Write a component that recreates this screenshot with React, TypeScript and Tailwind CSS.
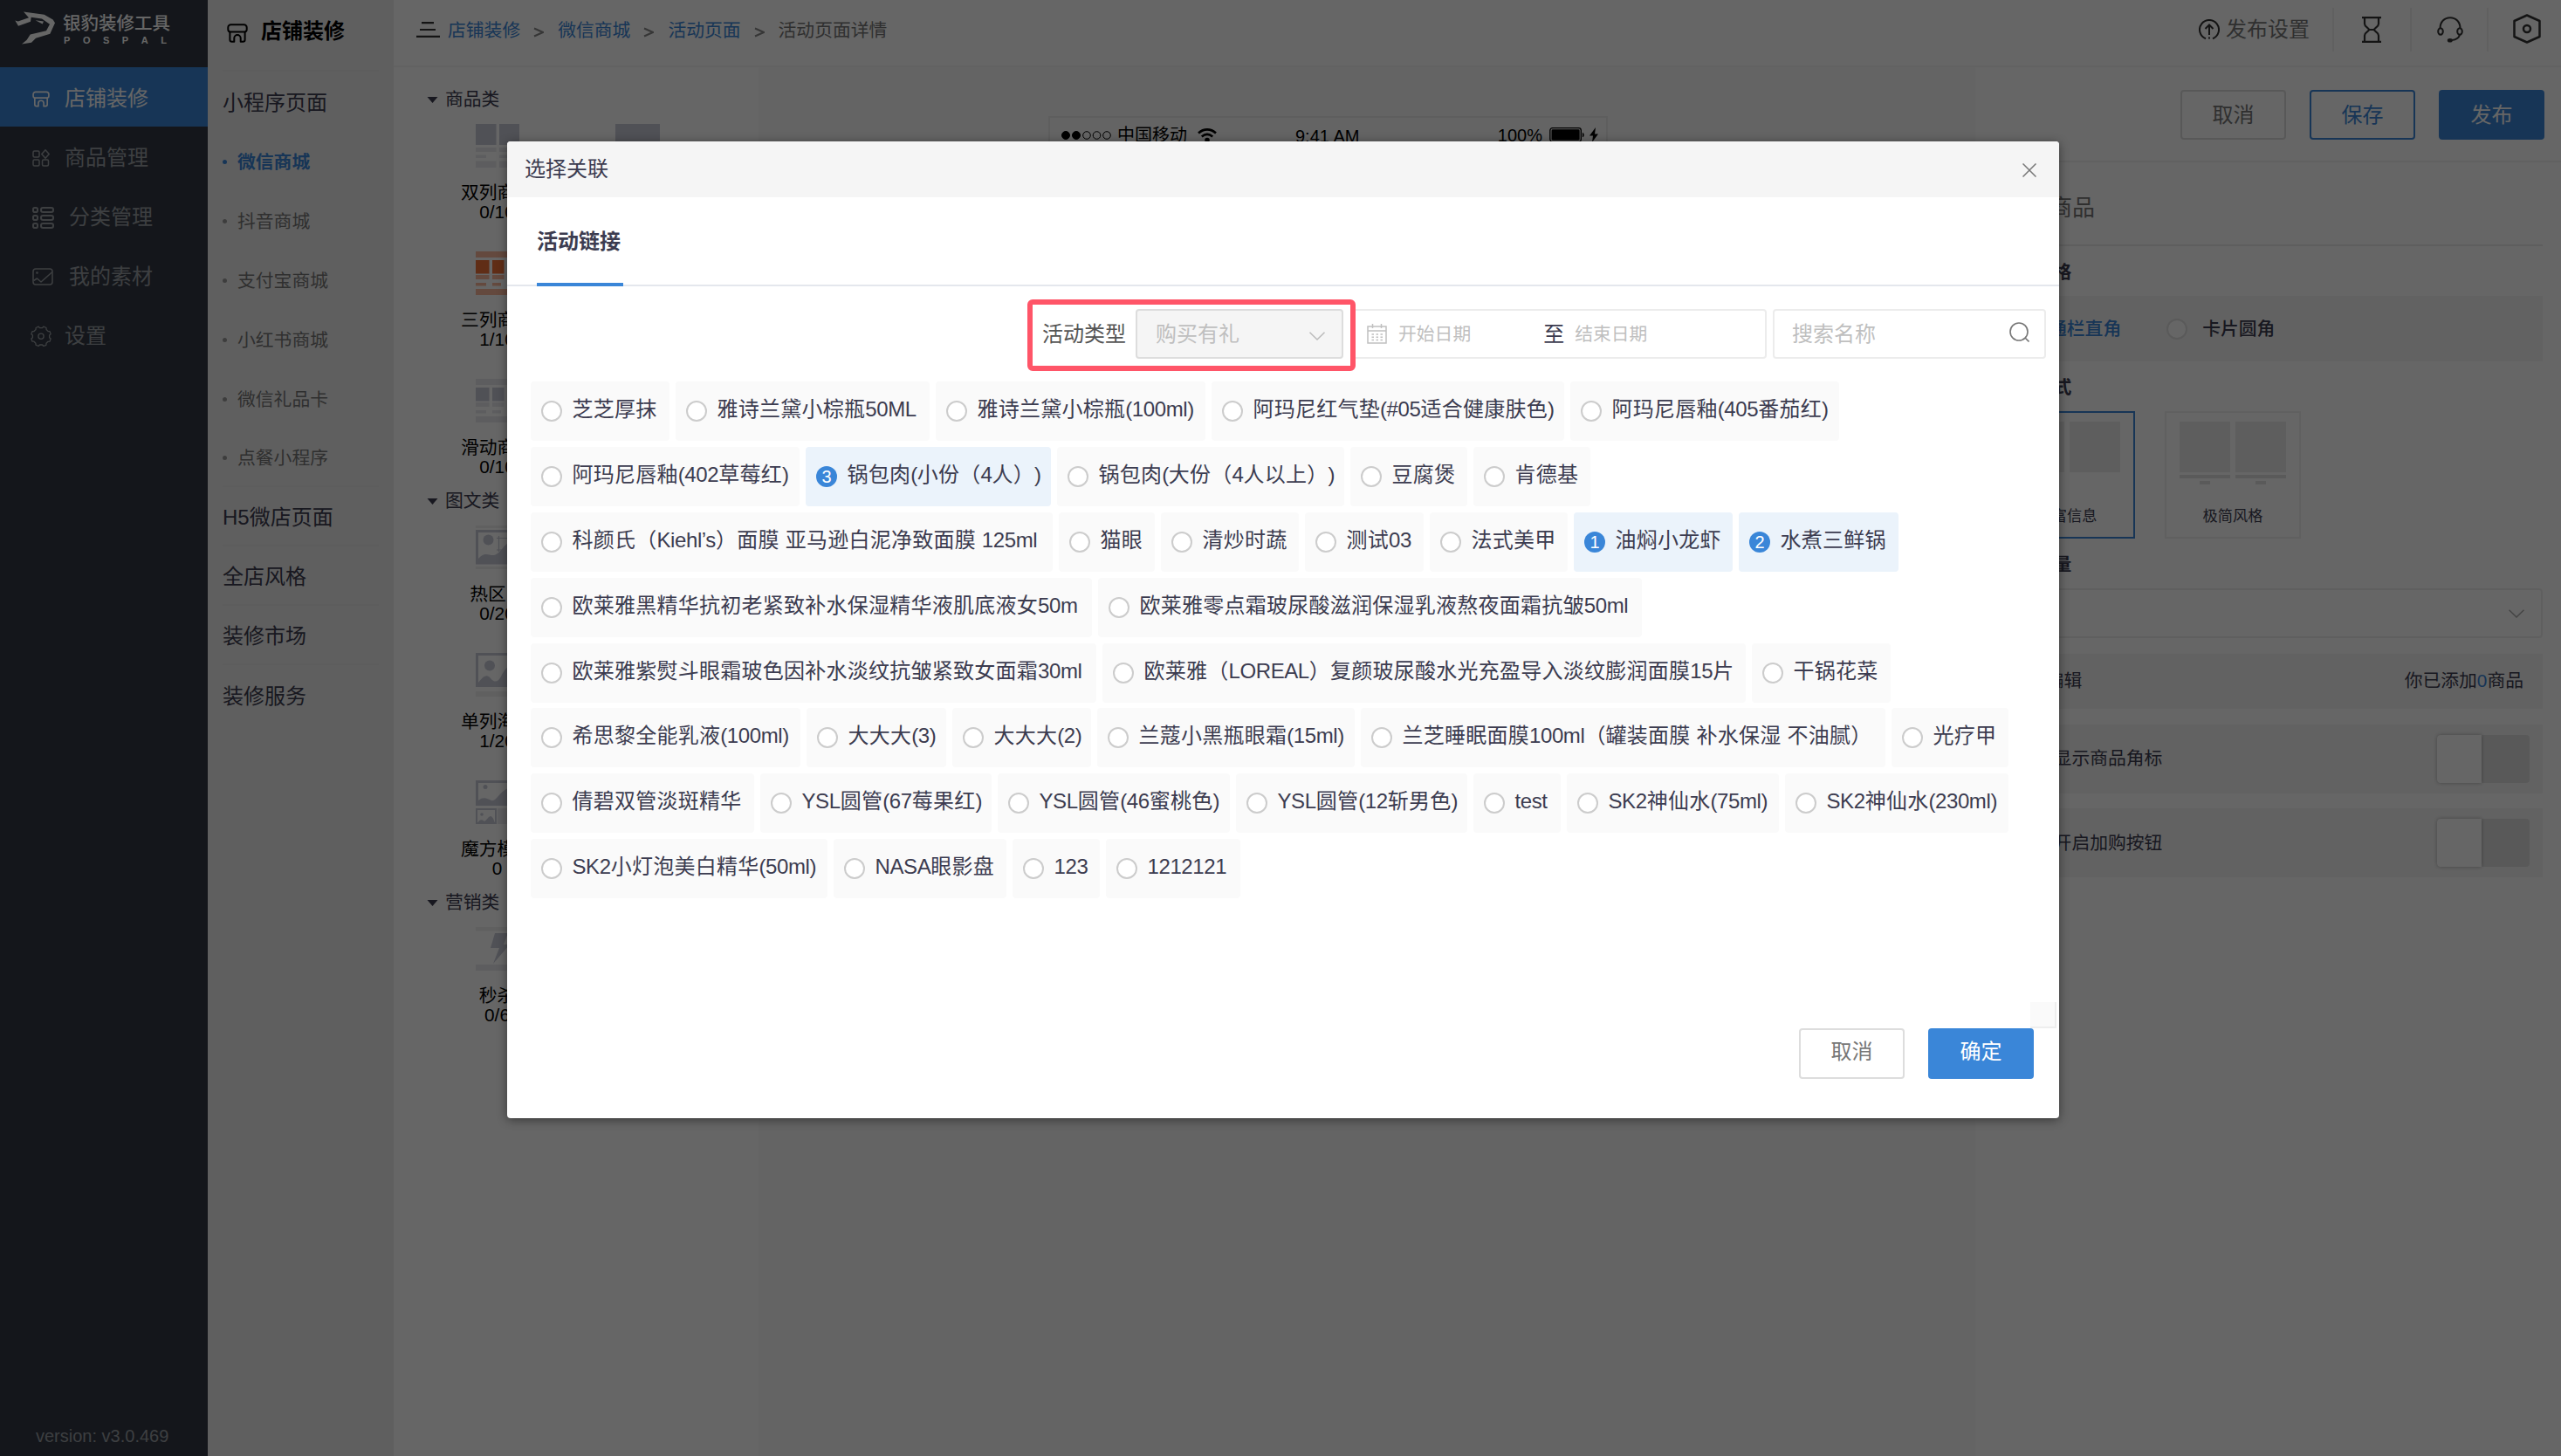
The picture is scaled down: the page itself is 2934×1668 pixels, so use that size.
import React from "react";

type IconProps = { className?: string };

const StoreIcon = ({ className = "" }: IconProps) => (
  <svg viewBox="0 0 24 22" fill="none" stroke="currentColor" strokeWidth="2" strokeLinejoin="round" className={className}>
    <path d="M4.5 1.2h15a3.2 3.2 0 0 1 3.2 3.2v2.4a2.6 2.6 0 0 1-2.6 2.6H3.9a2.6 2.6 0 0 1-2.6-2.6V4.400a3.200 3.200 0 0 1 3.200-3.200z" />
    <path d="M3.400 9.600v8.900a2.300 2.300 0 0 0 2.300 2.300h2.600v-4a3.700 3.700 0 0 1 7.400 0v4h2.600a2.300 2.300 0 0 0 2.300-2.300V9.600" />
  </svg>
);

const GoodsIcon = ({ className = "" }: IconProps) => (
  <svg viewBox="0 0 20 20" fill="none" stroke="currentColor" strokeWidth="1.5" className={className}>
    <rect x="1" y="2" width="7" height="7" rx="1.5" />
    <rect x="1" y="12" width="7" height="7" rx="1.500" />
    <rect x="11.500" y="12" width="7" height="7" rx="1.500" />
    <path d="M15 .8l4.200 4.700L15 10.200l-4.200-4.700z" strokeLinejoin="round" />
  </svg>
);

const CategoryIcon = ({ className = "" }: IconProps) => (
  <svg viewBox="0 0 25 25" fill="none" stroke="currentColor" strokeWidth="2" className={className}>
    {[1, 10, 19].map((y) => (
      <g key={y}>
        <rect x="1" y={y} width="5" height="5" rx="1.800" />
        <rect x="10" y={y} width="14" height="5" rx="2.200" />
      </g>
    ))}
  </svg>
);

const MaterialIcon = ({ className = "" }: IconProps) => (
  <svg viewBox="0 0 24 20" fill="none" stroke="currentColor" strokeWidth="1.500" className={className}>
    <rect x="1" y="1" width="22" height="18" rx="3" />
    <path d="M1.500 14.500l4-2.500 4.500 4L23 4.500" strokeLinejoin="round" />
    <circle cx="5.500" cy="5.500" r=".6" />
  </svg>
);

const GearIcon = ({ className = "" }: IconProps) => (
  <svg viewBox="0 0 24 24" fill="none" stroke="currentColor" strokeWidth="1.300" strokeLinejoin="round" className={className}>
    <path d="M9.200 1.200l1.300 1.400h3l1.300-1.400 3.200 1.300.1 2 2 2.100h2l1 3.200-1.500 1.200v2.800l1.500 1.300-1.100 3.100-2 .1-2 2-.1 2-3.100 1.200-1.300-1.500h-3l-1.300 1.500-3.200-1.300-.1-2-2-2-2-.1L.9 15l1.500-1.300v-2.800L.9 9.700 2 6.600l2-.1 2-2 .1-2z" />
    <circle cx="12" cy="12.300" r="3.100" />
  </svg>
);

const Logo = () => (
  <svg viewBox="51 41 138 113" className="h-[38px] w-[46px] text-white" fill="currentColor">
    <path d="M52 72l10 3 37-13-18-20 71 10 30 17 7 11-17 38-49 15-15 15-33 5 17-14 12-19 55-13 12-22-27-19-37-5-2 15-42 15z" />
    <path d="M122 71l28 4-4 9z" />
  </svg>
);

const navItems = [
  { label: "店铺装修", icon: <StoreIcon className="h-[19px] w-5" />, box: "ml-[37px] w-5 mr-[17px]", active: true },
  { label: "商品管理", icon: <GoodsIcon className="h-5 w-5" />, box: "ml-[37px] w-5 mr-[17px]" },
  { label: "分类管理", icon: <CategoryIcon className="h-[25px] w-[25px]" />, box: "ml-[37px] w-[25px] mr-[17px]" },
  { label: "我的素材", icon: <MaterialIcon className="h-5 w-6" />, box: "ml-[37px] w-6 mr-[18px]" },
  { label: "设置", icon: <GearIcon className="h-6 w-6" />, box: "ml-[35px] w-6 mr-[15px]" },
];

const Sidebar = () => (
  <aside className="flex h-full w-[238px] shrink-0 flex-col bg-[#323944]">
    <div className="flex h-[77px] items-start pt-[13px] pl-[17px]">
      <Logo />
      <div className="ml-[9px] pt-px text-white">
        <div className="text-[20.500px] leading-[26px] font-medium">银豹装修工具</div>
        <div className="flex w-[119px] justify-between pl-px text-[11px] leading-[12px] font-bold">
          {"POSPAL".split("").map((c, i) => (
            <span key={i}>{c}</span>
          ))}
        </div>
      </div>
    </div>
    <nav>
      {navItems.map((n) => (
        <div key={n.label} className={n.active ? "flex h-[68px] items-center bg-[#3a86d8] text-white" : "flex h-[68px] items-center text-[#999da3]"}>
          <div className={n.box + " pt-1"}>{n.icon}</div>
          <span className="pt-[3px] text-2xl">{n.label}</span>
        </div>
      ))}
    </nav>
    <div className="mt-auto pb-[9px] pl-[41px] text-[20px] leading-7 text-[#999da3]">version: v3.0.469</div>
  </aside>
);

const subItems = ["微信商城", "抖音商城", "支付宝商城", "小红书商城", "微信礼品卡", "点餐小程序"];
const sections = ["H5微店页面", "全店风格", "装修市场", "装修服务"];

const SubNav = () => (
  <aside className="h-full w-[213px] shrink-0 bg-[#eeeeee] px-[17px]">
    <div className="flex h-[82px] items-start border-b-2 border-[#e9e9e9]">
      <StoreIcon className="mt-[27px] ml-[5px] h-[22px] w-6 text-black" />
      <span className="mt-[18px] ml-[15px] text-2xl leading-9 font-bold text-black">店铺装修</span>
    </div>
    <div className="flex h-[68px] items-center pt-1 text-2xl text-[#3c3c50]">小程序页面</div>
    {subItems.map((s, i) => (
      <div
        key={s}
        className={
          "flex h-[68px] items-center pt-[3px] text-[20.800px] " +
          (i === 0 ? "font-bold text-[#3a86d8] " : "text-[#777] ") +
          (i === subItems.length - 1 ? "border-b-2 border-[#e9e9e9]" : "")
        }
      >
        <span className={i === 0 ? "mr-[12px] h-[5px] w-[5px] rounded-full bg-[#3a86d8]" : "mr-[12px] h-[5px] w-[5px] rounded-full bg-[#999]"} />
        {s}
      </div>
    ))}
    {sections.map((s, i) => (
      <div key={s} className={"flex h-[68px] items-center pt-1 text-2xl text-[#3c3c50] " + (i < 3 ? "border-b-2 border-[#e9e9e9]" : "")}>
        {s}
      </div>
    ))}
  </aside>
);

const TopBar = () => (
  <header className="flex h-[77px] w-full shrink-0 items-start border-b-2 border-[#f5f5f5] bg-white">
    <svg viewBox="0 0 27 18" className="mt-[25px] ml-[26px] h-[18px] w-[27px]" stroke="#333" strokeWidth="2.200">
      <path d="M6 1.200h14M4 9h18M0 16.800h27" />
    </svg>
    <div className="mt-[19px] flex items-center pl-[9px] text-[20.800px] leading-8 text-[#3a86d8]">
      {["店铺装修", "微信商城", "活动页面"].map((t) => (
        <React.Fragment key={t}>
          <span>{t}</span>
          <svg viewBox="0 0 12 12" className="mt-[3px] mr-[16px] ml-[15px] h-3 w-3" fill="none" stroke="#888" strokeWidth="2">
            <path d="M1 1.500l10 4.500-10 4.500" />
          </svg>
        </React.Fragment>
      ))}
      <span className="text-[#777]">活动页面详情</span>
    </div>
    <div className="ml-auto flex items-start">
      <svg viewBox="0 0 24 24" className="mt-[22px] h-6 w-6" fill="none" stroke="#333" strokeWidth="2">
        <path d="M8 22.200A11 11 0 1 1 16 22.200M12 18V7M7.500 11L12 6.500 16.500 11M12 20.500v2" />
      </svg>
      <span className="mt-4 ml-[7px] text-2xl leading-9 text-[#777]">发布设置</span>
      <div className="mt-[9px] ml-[26px] h-[50px] w-0.5 bg-[#f0f0f0]" />
      <svg viewBox="0 0 22 30" className="mt-[19px] ml-[32px] h-[30px] w-[22px]" fill="none" stroke="#333" strokeWidth="2.200">
        <path d="M0 1.200h22M0 28.800h22M3 1.200v7c0 4 5 4.500 5 6.800s-5 2.800-5 6.800v7M19 1.200v7c0 4-5 4.500-5 6.800s5 2.800 5 6.800v7M7 15h8" />
      </svg>
      <div className="mt-[9px] ml-[33px] h-[50px] w-0.5 bg-[#f0f0f0]" />
      <svg viewBox="0 0 30 30" className="mt-[19px] ml-[29px] h-[30px] w-[30px]" fill="none" stroke="#333" strokeWidth="2">
        <path d="M3.500 13.500C3.500 6 8.500 1.200 15 1.200S26.500 6 26.500 13.500" />
        <ellipse cx="4" cy="17" rx="2.800" ry="3.800" />
        <ellipse cx="26" cy="17" rx="2.800" ry="3.800" />
        <path d="M26 21c-1 3.500-4.500 5.500-9 6" />
        <ellipse cx="14.800" cy="27.200" rx="2" ry="1.300" fill="#333" />
      </svg>
      <div className="mt-[9px] ml-[27px] h-[50px] w-0.5 bg-[#f0f0f0]" />
      <svg viewBox="0 0 32 34" className="mt-[16px] mr-[23px] ml-[28px] h-[34px] w-8" fill="none" stroke="#333" strokeWidth="2.500" strokeLinejoin="round">
        <path d="M16 1.500L30.500 8v18L16 32.500 1.500 26V8z" />
        <circle cx="16" cy="17" r="4" />
      </svg>
    </div>
  </header>
);

const GridThumb = ({ cols, accent = false }: { cols: number; accent?: boolean }) => {
  const main = accent ? "#f07038" : "#c8cad8";
  const soft = accent ? "#f9b79c" : "#e8e9ee";
  if (cols === 2)
    return (
      <svg viewBox="0 0 50 50" className="h-[50px] w-[50px]">
        {[0, 27].map((x) => (
          <g key={x}>
            <rect x={x} width="23.500" height="24" fill={main} />
            <rect x={x} y="27" width="23.500" height="5" fill={soft} />
            <rect x={x} y="35.500" width="12" height="3.500" fill={soft} />
            <rect x={x} y="42.500" width="23.500" height="7.500" fill={soft} />
          </g>
        ))}
      </svg>
    );
  return (
    <svg viewBox="0 0 50 50" className="h-[50px] w-[50px]">
      <rect width="50" height="7" fill={soft} />
      {[0, 19, 36].map((x) => (
        <g key={x}>
          <rect x={x} y="10" width={x ? 13.5 : 15.5} height="15.500" fill={main} />
          <rect x={x} y="27" width={x ? 13.5 : 15.5} height="5" fill={soft} />
          <rect x={x} y="36" width={x ? 10 : 12} height="3.500" fill={soft} />
        </g>
      ))}
      <rect y="43" width="50" height="7" fill={soft} />
    </svg>
  );
};

const HotspotThumb = () => (
  <svg viewBox="0 0 50 50" className="h-[50px] w-[50px]">
    <rect width="50" height="3" fill="#f0f0f0" />
    <rect x="1.500" y="6.500" width="47" height="36.500" fill="none" stroke="#c8cad8" strokeWidth="3" />
    <circle cx="14.500" cy="16.500" r="6" fill="#c8cad8" />
    <path d="M3 38c8-9 12-3 18-4s10-10 16-14l12 8v15H3z" fill="#c8cad8" />
    <path d="M26.500 12v18M24 14.500h18M24 28h18" stroke="#c8cad8" strokeWidth="1.200" />
    <rect y="47" width="50" height="3" fill="#f0f0f0" />
  </svg>
);

const PosterThumb = () => (
  <svg viewBox="0 0 50 50" className="h-[50px] w-[50px]">
    <rect x="1.500" y="1.500" width="47" height="36" fill="none" stroke="#c8cad8" strokeWidth="3" />
    <circle cx="16" cy="14.500" r="6" fill="#c8cad8" />
    <path d="M3 34c5-6 9-11 14-5s9 4 12-2 6-11 9-11l11 12v10H3z" fill="#c8cad8" />
    <rect y="44" width="50" height="6" fill="#f0f0f0" />
  </svg>
);

const CubeThumb = () => (
  <svg viewBox="0 0 50 50" className="h-[50px] w-[50px]">
    <rect x="1.500" y="1.500" width="47" height="26" fill="none" stroke="#c8cad8" strokeWidth="3" />
    <circle cx="11" cy="7.500" r="2.500" fill="#c8cad8" />
    <path d="M3 23c6-5 10-2 15 0s10-11 19-14l12 6v14H3z" fill="#c8cad8" />
    <rect x="1" y="33" width="22" height="16" fill="none" stroke="#c8cad8" strokeWidth="2" />
    <circle cx="7" cy="39" r="1.800" fill="#c8cad8" />
    <path d="M2 49c2-4 5-5 8-2 3-2 5-6 7-6s4 4 5 8z" fill="#c8cad8" />
    <rect x="25" y="32" width="25" height="18" fill="#e8e9ee" />
  </svg>
);

const FlashThumb = () => (
  <svg viewBox="0 0 50 50" className="h-[50px] w-[50px]">
    <rect width="50" height="4.500" fill="#f0f0f0" />
    <path d="M22 7h15l-5 13h7L20 42l7-18h-10z" fill="#c8cad8" />
    <rect y="43" width="50" height="7" fill="#e8e9ee" />
  </svg>
);

const groups = [
  {
    title: "商品类",
    items: [
      { name: "双列商品", count: "0/10", thumb: <GridThumb cols={2} />, extra: true },
      { name: "三列商品", count: "1/10", thumb: <GridThumb cols={3} accent /> },
      { name: "滑动商品", count: "0/10", thumb: <GridThumb cols={3} /> },
    ],
  },
  {
    title: "图文类",
    items: [
      { name: "热区图", count: "0/20", thumb: <HotspotThumb /> },
      { name: "单列海报", count: "1/20", thumb: <PosterThumb /> },
      { name: "魔方模板", count: "0", thumb: <CubeThumb /> },
    ],
  },
  { title: "营销类", items: [{ name: "秒杀", count: "0/6", thumb: <FlashThumb /> }] },
];

const ComponentPanel = () => (
  <section className="h-full w-[418px] shrink-0 bg-white pt-[21px] pl-[38px]">
    {groups.map((g) => (
      <div key={g.title}>
        <div className="flex h-8 items-center text-[20.800px] text-[#3c3c50]">
          <svg viewBox="0 0 12 7" className="mr-[8px] h-[7px] w-[13px]" fill="#3c3c50">
            <path d="M0 0h12L6 7z" />
          </svg>
          {g.title}
        </div>
        <div className="mt-3 flex flex-col gap-[22px]">
          {g.items.map((it) => (
            <div key={it.name} className="flex h-[124px]">
              <div className="flex w-[162px] flex-col items-center text-[20.800px] leading-[23px] text-black">
                {it.thumb}
                <div className="mt-[17px] -ml-px">{it.name}</div>
                <div className="-mt-px -ml-px">{it.count}</div>
              </div>
              {"extra" in it && it.extra ? <div className="ml-[54px] h-6 w-[51px] bg-[#c8cad8]" /> : null}
            </div>
          ))}
        </div>
      </div>
    ))}
  </section>
);

const PhonePreview = () => (
  <section className="flex h-full flex-1 justify-center bg-[#fafafa] pr-[89px]">
    <div className="mt-[56px] h-[1000px] w-[641px] border-2 border-[#ebebeb] text-[20px] text-black">
      <div className="flex h-[39px] items-center">
        <svg viewBox="0 0 58 12" className="ml-3 h-3 w-[58px]" stroke="#000">
          <circle cx="6" cy="6" r="4.500" />
          <circle cx="18" cy="6" r="4.500" />
          <circle cx="30" cy="6" r="4.300" fill="none" />
          <circle cx="41.500" cy="6" r="4.300" fill="none" />
          <circle cx="53" cy="6" r="4.300" fill="none" />
        </svg>
        <span className="ml-[7px]">中国移动</span>
        <svg viewBox="0 0 22 16" className="ml-3 h-4 w-[22px]" fill="none" stroke="#000" strokeWidth="2.600">
          <path d="M1 5.500c6-5.500 14-5.500 20 0M4.800 9.500c4-3.500 8.400-3.500 12.400 0" />
          <circle cx="11" cy="13.500" r="1.500" fill="#000" />
        </svg>
        <span className="ml-[90px] pt-0.5">9:41 AM</span>
        <span className="ml-auto">100%</span>
        <svg viewBox="0 0 42 18" className="ml-[7px] h-[17px] w-[42px]">
          <rect x=".7" y=".7" width="37.600" height="16.600" rx="3" fill="none" stroke="#000" strokeWidth="1.400" />
          <rect x="2.500" y="2.500" width="34" height="13" rx="1.500" />
          <path d="M40 6c2.500 1 2.500 5 0 6z" />
        </svg>
        <svg viewBox="0 0 10 17" className="mr-[9px] ml-[5px] h-[17px] w-2.5">
          <path d="M7 0L0 9.500h4L3 17l7-9.500H6z" />
        </svg>
      </div>
    </div>
  </section>
);

const Toggle = () => (
  <div className="flex h-[55px] w-[106px] rounded bg-[#dfdfdf]">
    <div className="h-full w-[51px] rounded-l bg-white shadow-[0_0_4px_rgba(0,0,0,0.3)]" />
  </div>
);

const PropertyPanel = () => (
  <section className="h-full w-[671px] shrink-0 bg-white">
    <div className="flex h-[109px] items-start justify-end gap-[27px] border-b-2 border-[#f3f3f3] pt-[26px] pr-[19px] text-2xl">
      <div className="flex h-[57px] w-[121px] items-center justify-center rounded border-2 border-[#ddd] text-[#777]">取消</div>
      <div className="flex h-[57px] w-[121px] items-center justify-center rounded border-2 border-[#3a86d8] text-[#3a86d8]">保存</div>
      <div className="flex h-[57px] w-[121px] items-center justify-center rounded bg-[#3a86d8] text-white">发布</div>
    </div>
    <div className="mr-[21px] ml-[27px] text-[20.800px] text-[#3c3c50]">
      <div className="flex h-[96px] items-center border-b-2 border-[#eaeaea] pt-2.5 pl-[6px] text-[26px] text-[#777]">三列商品</div>
      <div className="flex h-[57px] items-center pt-0.5 font-bold">商品风格</div>
      <div className="flex h-[75px] items-center bg-[#f5f5f5] pl-[20px]">
        <span className="h-6 w-6 rounded-full border-2 border-[#3a86d8]" />
        <span className="ml-[13px] font-medium text-[#3a86d8]">通栏直角</span>
        <span className="ml-[52px] h-6 w-6 rounded-full border-2 border-[#e0e0e0] bg-white" />
        <span className="ml-[17px] font-medium">卡片圆角</span>
      </div>
      <div className="flex h-[57px] items-center pt-0.5 font-bold">显示样式</div>
      <div className="flex gap-[34px] text-[17.200px]">
        <div className="h-[146px] w-[156px] border-2 border-[#3a86d8] pt-2.5">
          <div className="flex justify-center gap-1.5">
            <div className="h-[58px] w-[58px] bg-[#ebebeb]" />
            <div className="h-[58px] w-[58px] bg-[#ebebeb]" />
          </div>
          <div className="mt-[38px] text-center leading-6">丰富信息</div>
        </div>
        <div className="h-[146px] w-[156px] border-2 border-[#f0f0f0] pt-2.5">
          <div className="flex justify-center gap-1.5">
            {[0, 1].map((k) => (
              <div key={k} className="flex w-[58px] flex-col items-center">
                <div className="h-[58px] w-full bg-[#ebebeb]" />
                <div className="mt-[3px] h-1 w-full bg-[#e0e0e0]" />
                <div className="mt-[3px] h-1 w-3 bg-[#e0e0e0]" />
              </div>
            ))}
          </div>
          <div className="mt-[24px] text-center leading-6">极简风格</div>
        </div>
      </div>
      <div className="flex h-[57px] items-center pt-0.5 font-bold">商品数量</div>
      <div className="flex h-[57px] items-center justify-end rounded border-2 border-[#eee] pr-[19px]">
        <svg viewBox="0 0 18 10" className="h-2.5 w-[18px]" fill="none" stroke="#aaa" strokeWidth="1.500">
          <path d="M.5.800L9 9 17.500.800" />
        </svg>
      </div>
      <div className="mt-[18px] flex h-[63px] items-center justify-between bg-[#f5f5f5] pr-[22px] pb-0.5 pl-3">
        <span>商品编辑</span>
        <span>
          你已添加<span className="text-[#3a86d8]">0</span>商品
        </span>
      </div>
      {["是否显示商品角标", "是否开启加购按钮"].map((t) => (
        <div key={t} className="mt-[17.500px] flex h-[79px] items-center justify-between bg-[#f5f5f5] pr-[15px] pl-[21px]">
          <span>{t}</span>
          <Toggle />
        </div>
      ))}
    </div>
  </section>
);

type Chip = { t: string; w: string; n?: number };

const rows: Chip[][] = [
  [
    { t: "芝芝厚抹", w: "w-[159px]" },
    { t: "雅诗兰黛小棕瓶50ML", w: "w-[291px]" },
    { t: "雅诗兰黛小棕瓶(100ml)", w: "w-[309px]" },
    { t: "阿玛尼红气垫(#05适合健康肤色)", w: "w-[404px]" },
    { t: "阿玛尼唇釉(405番茄红)", w: "w-[308px]" },
  ],
  [
    { t: "阿玛尼唇釉(402草莓红)", w: "w-[308px]" },
    { t: "锅包肉(小份（4人）)", w: "w-[281px]", n: 3 },
    { t: "锅包肉(大份（4人以上）)", w: "w-[329px]" },
    { t: "豆腐煲", w: "w-[134px]" },
    { t: "肯德基", w: "w-[134px]" },
  ],
  [
    { t: "科颜氏（Kiehl’s）面膜 亚马逊白泥净致面膜 125ml", w: "w-[598px]" },
    { t: "猫眼", w: "w-[110px]" },
    { t: "清炒时蔬", w: "w-[158px]" },
    { t: "测试03", w: "w-[136px]" },
    { t: "法式美甲", w: "w-[158px]" },
    { t: "油焖小龙虾", w: "w-[182px]", n: 1 },
    { t: "水煮三鲜锅", w: "w-[183px]", n: 2 },
  ],
  [
    { t: "欧莱雅黑精华抗初老紧致补水保湿精华液肌底液女50m", w: "w-[643px]" },
    { t: "欧莱雅零点霜玻尿酸滋润保湿乳液熬夜面霜抗皱50ml", w: "w-[623px]" },
  ],
  [
    { t: "欧莱雅紫熨斗眼霜玻色因补水淡纹抗皱紧致女面霜30ml", w: "w-[648px]" },
    { t: "欧莱雅（LOREAL）复颜玻尿酸水光充盈导入淡纹膨润面膜15片", w: "w-[737px]" },
    { t: "干锅花菜", w: "w-[159px]" },
  ],
  [
    { t: "希思黎全能乳液(100ml)", w: "w-[309px]" },
    { t: "大大大(3)", w: "w-[160px]" },
    { t: "大大大(2)", w: "w-[159px]" },
    { t: "兰蔻小黑瓶眼霜(15ml)", w: "w-[295px]" },
    { t: "兰芝睡眠面膜100ml（罐装面膜 补水保湿 不油腻）", w: "w-[601px]" },
    { t: "光疗甲", w: "w-[134px]" },
  ],
  [
    { t: "倩碧双管淡斑精华", w: "w-[256px]" },
    { t: "YSL圆管(67莓果红)", w: "w-[265px]" },
    { t: "YSL圆管(46蜜桃色)", w: "w-[266px]" },
    { t: "YSL圆管(12斩男色)", w: "w-[265px]" },
    { t: "test", w: "w-[100px]" },
    { t: "SK2神仙水(75ml)", w: "w-[243px]" },
    { t: "SK2神仙水(230ml)", w: "w-[256px]" },
  ],
  [
    { t: "SK2小灯泡美白精华(50ml)", w: "w-[340px]" },
    { t: "NASA眼影盘", w: "w-[198px]" },
    { t: "123", w: "w-[100px]" },
    { t: "1212121", w: "w-[154px]" },
  ],
];

const MixedText = ({ text }: { text: string }) => (
  <>
    {text.split(/([!-~’]+)/).map((part, i) =>
      i % 2 ? (
        <span key={i} className="tracking-[-0.4px]">
          {part}
        </span>
      ) : (
        part
      ),
    )}
  </>
);

const ChipItem = ({ c }: { c: Chip }) => (
  <div className={"flex h-[68px] shrink-0 items-center rounded-sm pl-3 whitespace-nowrap " + c.w + (c.n ? " bg-[#ebf3fb]" : " bg-[#fafafa]")}>
    {c.n ? (
      <span className="flex h-6 w-6 shrink-0 items-center justify-center rounded-full bg-[#3a86d8] text-[20px] leading-6 text-white">{c.n}</span>
    ) : (
      <span className="h-6 w-6 shrink-0 rounded-full border-2 border-[#ccc] bg-white" />
    )}
    <span className="-mt-1 ml-[11.500px] tracking-[0.25px] [text-spacing-trim:space-all]">
      <MixedText text={c.t} />
    </span>
  </div>
);

const Toolbar = () => (
  <div className="mt-[26px] flex h-[57px] items-center justify-end pr-[15px] text-2xl">
    <div className="relative flex h-full items-center">
      <span className="mr-[11px] text-[#555]">活动类型</span>
      <div className="flex h-[57px] w-[238px] items-center justify-between rounded border-2 border-[#ddd] bg-[#f5f5f5] pr-[19px] pl-[21px] text-[#bfbfbf]">
        购买有礼
        <svg viewBox="0 0 18 10" className="mt-1 h-2.5 w-[18px]" fill="none" stroke="#bbb" strokeWidth="1.500">
          <path d="M.5.800L9 9 17.500.800" />
        </svg>
      </div>
      <div className="absolute -top-[11px] -right-[14px] -left-[17px] h-[82px] rounded-md border-[6px] border-[#ff5568]" />
    </div>
    <div className="ml-2 flex h-[57px] w-[477px] items-center rounded border-2 border-[#ececec] pl-[17px] text-[20.800px] text-[#bfbfbf]">
      <svg viewBox="0 0 23 23" className="h-[23px] w-[23px]" fill="none" stroke="#c0c0c0" strokeWidth="1.500">
        <rect x="1" y="3" width="21" height="19" />
        <path d="M1 8h21M6.500 0v5M16.500 0v5" />
        <path d="M5.500 12h12.500M5.500 15.200h12.500M5.500 18.400h12.500" strokeDasharray="2.500 2.500" />
      </svg>
      <span className="ml-[13px]">开始日期</span>
      <span className="ml-[83px] text-2xl text-[#3c3c50]">至</span>
      <span className="ml-3">结束日期</span>
    </div>
    <div className="ml-[7px] flex h-[57px] w-[313px] items-center justify-between rounded border-2 border-[#ececec] pr-[17px] pl-[20px] text-[#bfbfbf]">
      搜索名称
      <svg viewBox="0 0 23 23" className="-mt-1 h-[23px] w-[23px]" fill="none" stroke="#777" strokeWidth="1.600">
        <circle cx="11" cy="11" r="10" />
        <path d="M18 18l4.500 4.500" />
      </svg>
    </div>
  </div>
);

const Modal = () => (
  <div className="mt-[162px] ml-[581px] flex h-[1119px] w-[1778px] flex-col overflow-hidden rounded bg-white shadow-[0_2px_12px_rgba(0,0,0,0.45)]">
    <div className="flex h-16 shrink-0 items-center justify-between bg-[#f5f5f5] pr-[26px] pl-5 text-2xl text-[#3c3c50]">
      选择关联
      <svg viewBox="0 0 16 16" className="mt-0.5 h-4 w-4" stroke="#777" strokeWidth="1.500">
        <path d="M.5.500l15 15M15.500.500l-15 15" />
      </svg>
    </div>
    <div className="flex h-[102px] shrink-0 border-b-2 border-[#e4e7ed] pl-[34px]">
      <div className="relative w-[99px] text-2xl leading-[102px] font-bold text-[#3c3c50]">
        活动链接
        <div className="absolute -bottom-0.5 left-0 h-1 w-full bg-[#3a86d8]" />
      </div>
    </div>
    <Toolbar />
    <div className="mt-[26px] ml-[27px] flex flex-col gap-[6.900px] text-2xl text-[#3c3c50]">
      {rows.map((r, i) => (
        <div key={i} className="flex gap-[7px]">
          {r.map((c) => (
            <ChipItem key={c.t} c={c} />
          ))}
        </div>
      ))}
    </div>
    <div className="mt-auto mr-[3px] h-[30px] w-[30px] shrink-0 self-end border-r-2 border-b-2 border-[#eee] bg-[#fafafa]" />
    <div className="mr-[29px] mb-[45px] flex shrink-0 justify-end gap-[27px] text-2xl">
      <button className="h-[58px] w-[121px] rounded border-2 border-[#ddd] bg-white pb-1 leading-none text-[#777]">取消</button>
      <button className="h-[58px] w-[121px] rounded bg-[#3a86d8] pb-1 leading-none text-white">确定</button>
    </div>
  </div>
);

export default function App() {
  return (
    <div className="relative flex h-[1668px] w-[2934px] overflow-hidden bg-white font-['Liberation_Sans','Noto_Sans_CJK_SC',sans-serif]">
      <Sidebar />
      <SubNav />
      <div className="flex h-full flex-1 flex-col">
        <TopBar />
        <div className="flex min-h-0 flex-1">
          <ComponentPanel />
          <PhonePreview />
          <PropertyPanel />
        </div>
      </div>
      <div className="absolute inset-0 bg-black/60">
        <Modal />
      </div>
    </div>
  );
}
